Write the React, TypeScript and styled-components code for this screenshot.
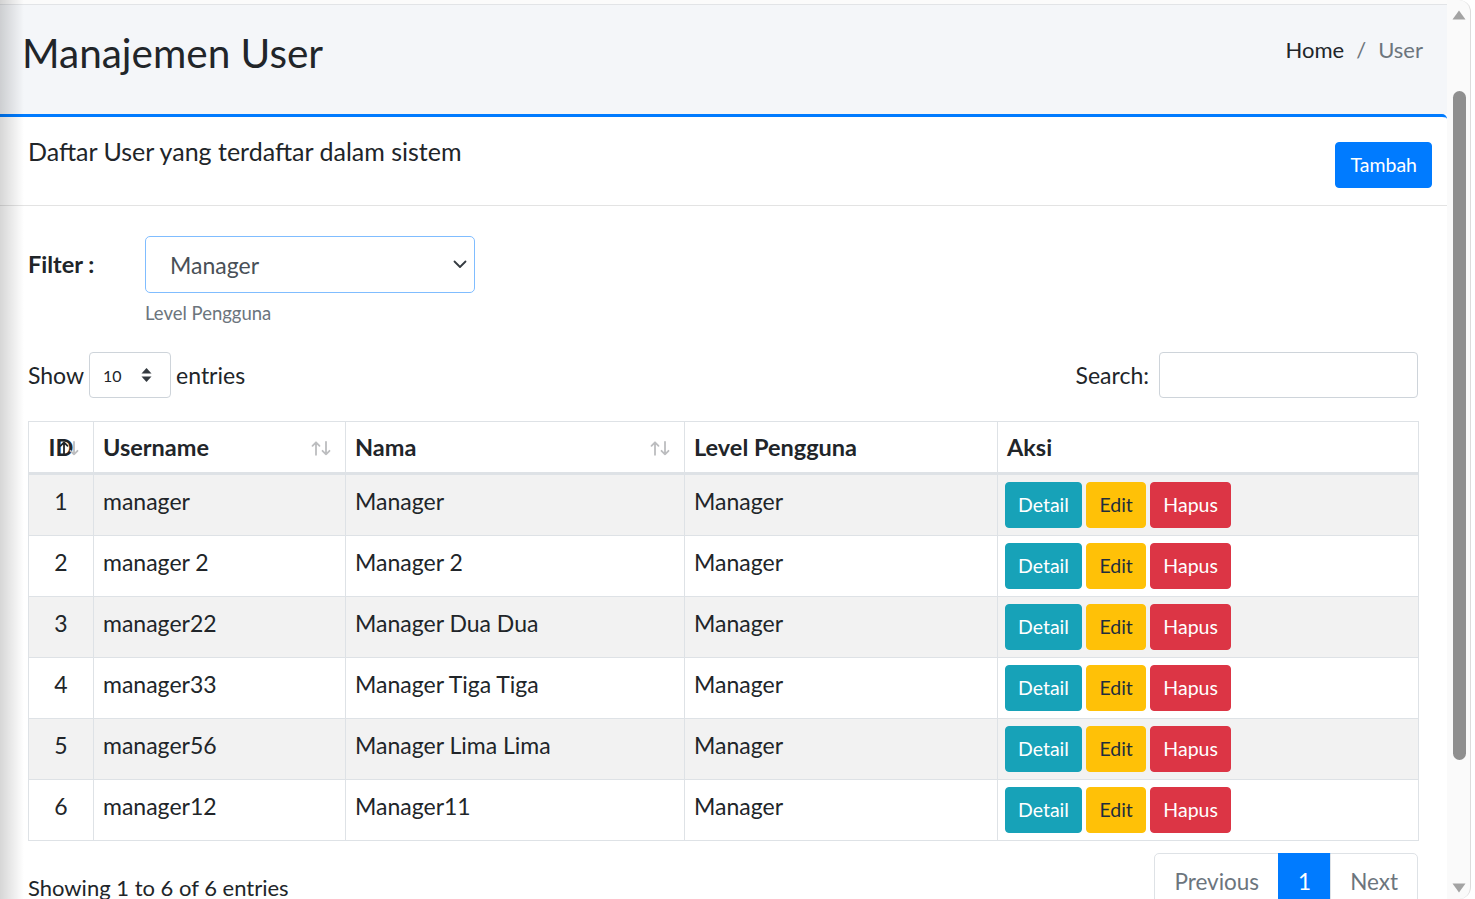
import styled, { createGlobalStyle, css } from "styled-components";

const GlobalStyle = createGlobalStyle`
  html, body {
    margin: 0;
    padding: 0;
    overflow: hidden;
  }
  body {
    font-family: Lato, "Noto Sans", "DejaVu Sans", sans-serif;
    color: #212529;
    background: #fff;
  }
  * {
    box-sizing: border-box;
  }
`;

type Variant = "primary" | "info" | "warning" | "danger";

const variants: Record<Variant, { bg: string; fg: string }> = {
  primary: { bg: "#007bff", fg: "#fff" },
  info: { bg: "#17a2b8", fg: "#fff" },
  warning: { bg: "#ffc107", fg: "#1f2d3d" },
  danger: { bg: "#dc3545", fg: "#fff" },
};

const users = [
  { id: 1, username: "manager", nama: "Manager", level: "Manager" },
  { id: 2, username: "manager 2", nama: "Manager 2", level: "Manager" },
  { id: 3, username: "manager22", nama: "Manager Dua Dua", level: "Manager" },
  { id: 4, username: "manager33", nama: "Manager Tiga Tiga", level: "Manager" },
  { id: 5, username: "manager56", nama: "Manager Lima Lima", level: "Manager" },
  { id: 6, username: "manager12", nama: "Manager11", level: "Manager" },
];

function SortArrows({ active }: { active?: boolean }) {
  return (
    <SortIcon width="20" height="16" viewBox="0 0 20 16">
      <g fill="none" strokeWidth="1.8" strokeLinecap="round" strokeLinejoin="round">
        <path d="M5 14.5V2M1.5 5.5L5 2l3.5 3.5" stroke={active ? "#212529" : "#bcbdbf"} />
        <path d="M15 1.5V14M11.5 10.5L15 14l3.5-3.5" stroke="#bcbdbf" />
      </g>
    </SortIcon>
  );
}

function App() {
  return (
    <>
      <GlobalStyle />
      <Frame>
        <Page>
          <SideShadow />
          <TopStrip />

          <ContentHeader>
            <PageTitle>Manajemen User</PageTitle>
            <Breadcrumb>
              <Crumb>Home</Crumb>
              <Separator>/</Separator>
              <Crumb $muted>User</Crumb>
            </Breadcrumb>
          </ContentHeader>

          <Card>
            <CardHeader>
              <CardTitle>Daftar User yang terdaftar dalam sistem</CardTitle>
              <Button $variant="primary" $top={25} $pad={14}>
                Tambah
              </Button>
            </CardHeader>

            <CardBody>
              <FilterRow>
                <FilterLabel>Filter :</FilterLabel>
                <FilterField>
                  <SelectBox>
                    <span>Manager</span>
                    <svg width="14" height="9" viewBox="0 0 14 9">
                      <path
                        d="M1.5 1.5L7 7l5.5-5.5"
                        fill="none"
                        stroke="#343a40"
                        strokeWidth="1.8"
                        strokeLinecap="round"
                        strokeLinejoin="round"
                      />
                    </svg>
                  </SelectBox>
                  <HelpText>Level Pengguna</HelpText>
                </FilterField>
              </FilterRow>

              <ControlsRow>
                <LengthControl>
                  <span>Show</span>
                  <SmallSelect>
                    <span>10</span>
                    <svg width="11" height="16" viewBox="0 0 11 16">
                      <path d="M5.5 1L10.5 6.5H0.5Z" fill="#343a40" />
                      <path d="M5.5 15L10.5 9.5H0.5Z" fill="#343a40" />
                    </svg>
                  </SmallSelect>
                  <span>entries</span>
                </LengthControl>

                <SearchControl>
                  <span>Search:</span>
                  <SearchInput />
                </SearchControl>
              </ControlsRow>

              <Table>
                <thead>
                  <tr>
                    <Th $width={65} $center>
                      ID
                      <SortArrows active />
                    </Th>
                    <Th $width={252}>
                      Username
                      <SortArrows />
                    </Th>
                    <Th $width={339}>
                      Nama
                      <SortArrows />
                    </Th>
                    <Th $width={313}>Level Pengguna</Th>
                    <Th $width={421}>Aksi</Th>
                  </tr>
                </thead>
                <tbody>
                  {users.map((u) => (
                    <Row key={u.id}>
                      <Td $center>{u.id}</Td>
                      <Td>{u.username}</Td>
                      <Td>{u.nama}</Td>
                      <Td>{u.level}</Td>
                      <ActionCell>
                        <ButtonGroup>
                          <Button $variant="info">Detail</Button>
                          <Button $variant="warning">Edit</Button>
                          <Button $variant="danger">Hapus</Button>
                        </ButtonGroup>
                      </ActionCell>
                    </Row>
                  ))}
                </tbody>
              </Table>

              <TableFooter>
                <Info>Showing 1 to 6 of 6 entries</Info>
                <Pagination>
                  <PageLink $first>Previous</PageLink>
                  <PageLink $active>1</PageLink>
                  <PageLink $last>Next</PageLink>
                </Pagination>
              </TableFooter>
            </CardBody>
          </Card>
        </Page>

        <Scrollbar>
          <Track>
            <ScrollArrow width="14" height="10" viewBox="0 0 14 10">
              <path d="M7 0.5L13.5 9.5H0.5Z" fill="#a3a3a3" />
            </ScrollArrow>
            <Thumb />
            <ScrollArrow width="14" height="10" viewBox="0 0 14 10" $bottom>
              <path d="M7 9.5L13.5 0.5H0.5Z" fill="#a3a3a3" />
            </ScrollArrow>
          </Track>
        </Scrollbar>
      </Frame>
    </>
  );
}

export default App;

const Frame = styled.div`
  display: flex;
  width: 1475px;
  height: 899px;
  overflow: hidden;
  background: #fff;
`;

const Page = styled.div`
  flex: 0 0 1447px;
  position: relative;
  overflow: hidden;
  background: #fff;
`;

const SideShadow = styled.div`
  position: absolute;
  top: 0;
  bottom: 0;
  left: 0;
  width: 24px;
  background: linear-gradient(to right, rgba(0, 0, 0, 0.16), rgba(0, 0, 0, 0));
  pointer-events: none;
  z-index: 2;
`;

const TopStrip = styled.div`
  height: 5px;
  background: #fbfbfb;
  border-bottom: 1px solid #e2e4e7;
`;

const ContentHeader = styled.div`
  height: 109px;
  background: #f4f6f9;
  display: flex;
  justify-content: space-between;
  align-items: flex-start;
  padding: 21px 24px 0 22px;
`;

const PageTitle = styled.h1`
  margin: 0;
  font-size: 40.5px;
  font-weight: 400;
  line-height: 53px;
`;

const Breadcrumb = styled.ol`
  list-style: none;
  margin: 6px 0 0;
  padding: 0;
  display: flex;
  font-size: 22px;
  line-height: 36px;
`;

const Crumb = styled.li<{ $muted?: boolean }>`
  color: ${(p) => (p.$muted ? "#6c757d" : "#212529")};
`;

const Separator = styled.li`
  color: #6c757d;
  padding: 0 12px;
`;

const Card = styled.div`
  background: #fff;
  border-top: 3px solid #007bff;
  border-top-right-radius: 5px;
`;

const CardHeader = styled.div`
  height: 89px;
  display: flex;
  justify-content: space-between;
  align-items: flex-start;
  padding: 0 15px 0 28px;
  border-bottom: 1px solid #e3e3e3;
`;

const CardTitle = styled.h3`
  margin: 18px 0 0;
  font-size: 25px;
  font-weight: 400;
  line-height: 33px;
`;

const Button = styled.button<{ $variant: Variant; $top?: number; $pad?: number }>`
  height: 46px;
  display: inline-flex;
  align-items: center;
  justify-content: center;
  border-radius: 4px;
  font-family: inherit;
  font-size: 19.5px;
  line-height: 1;
  cursor: pointer;
  ${(p) => css`
    margin-top: ${p.$top ?? 0}px;
    padding: 0 ${p.$pad ?? 12}px;
    background: ${variants[p.$variant].bg};
    border: 1px solid ${variants[p.$variant].bg};
    color: ${variants[p.$variant].fg};
  `}
`;

const CardBody = styled.div`
  padding: 30px 29px 0 28px;
`;

const FilterRow = styled.div`
  display: flex;
  align-items: flex-start;
`;

const FilterLabel = styled.label`
  width: 117px;
  font-weight: 700;
  font-size: 23.5px;
  line-height: 57px;
`;

const FilterField = styled.div`
  width: 330px;
`;

const SelectBox = styled.div`
  height: 57px;
  border: 1px solid #80bdff;
  border-radius: 5px;
  padding: 0 7px 0 24px;
  display: flex;
  align-items: center;
  justify-content: space-between;
  font-size: 23px;
  color: #495057;
`;

const HelpText = styled.div`
  margin-top: 6px;
  font-size: 18.5px;
  line-height: 29px;
  color: #6c757d;
`;

const ControlsRow = styled.div`
  margin-top: 24px;
  height: 46px;
  display: flex;
  justify-content: space-between;
  align-items: center;
  font-size: 23px;
`;

const LengthControl = styled.div`
  display: flex;
  align-items: center;
  gap: 5px;
`;

const SmallSelect = styled.div`
  width: 82px;
  height: 46px;
  border: 1px solid #ced4da;
  border-radius: 4px;
  padding: 0 18px 0 13px;
  display: flex;
  align-items: center;
  justify-content: space-between;
  font-size: 16px;
  color: #212529;
`;

const SearchControl = styled.div`
  display: flex;
  align-items: center;
  gap: 10px;
`;

const SearchInput = styled.div`
  width: 259px;
  height: 46px;
  border: 1px solid #ced4da;
  border-radius: 4px;
`;

const Table = styled.table`
  margin-top: 23px;
  width: 1390px;
  border-collapse: collapse;
  table-layout: fixed;
`;

const Th = styled.th<{ $width: number; $center?: boolean }>`
  position: relative;
  width: ${(p) => p.$width}px;
  border: 1px solid #dee2e6;
  border-bottom-width: 3px;
  padding: 7px 9px;
  text-align: ${(p) => (p.$center ? "center" : "left")};
  font-size: 23.5px;
  font-weight: 700;
  line-height: 36px;
`;

const SortIcon = styled.svg`
  position: absolute;
  right: 14px;
  top: 50%;
  transform: translateY(-42%);
`;

const Row = styled.tr`
  &:nth-child(odd) {
    background: #f2f2f2;
  }
`;

const Td = styled.td<{ $center?: boolean }>`
  border: 1px solid #dee2e6;
  padding: 8px 9px 7px;
  vertical-align: top;
  font-size: 23px;
  line-height: 36px;
  text-align: ${(p) => (p.$center ? "center" : "left")};
`;

const ActionCell = styled.td`
  border: 1px solid #dee2e6;
  padding: 7px 7px;
  vertical-align: top;
`;

const ButtonGroup = styled.div`
  display: flex;
  gap: 4.5px;
`;

const TableFooter = styled.div`
  margin-top: 12px;
  display: flex;
  justify-content: space-between;
  align-items: flex-start;
`;

const Info = styled.div`
  padding-top: 17px;
  font-size: 22px;
  line-height: 36px;
`;

const Pagination = styled.div`
  display: flex;
`;

const PageLink = styled.div<{ $active?: boolean; $first?: boolean; $last?: boolean }>`
  height: 56px;
  padding: 0 19px;
  margin-left: -1px;
  display: flex;
  align-items: center;
  font-size: 22.5px;
  border: 1px solid ${(p) => (p.$active ? "#007bff" : "#dee2e6")};
  background: ${(p) => (p.$active ? "#007bff" : "#fff")};
  color: ${(p) => (p.$active ? "#fff" : "#6c757d")};
  border-radius: ${(p) => (p.$first ? "5px 0 0 5px" : p.$last ? "0 5px 5px 0" : "0")};
`;

const Scrollbar = styled.div`
  flex: 0 0 28px;
  background: #fff;
`;

const Track = styled.div`
  width: 24px;
  height: 100%;
  background: #fafafa;
  border-right: 1px solid #dcdcdc;
  border-radius: 0 12px 12px 0;
  display: flex;
  flex-direction: column;
  align-items: center;
  padding-left: 1px;
`;

const ScrollArrow = styled.svg<{ $bottom?: boolean }>`
  flex: none;
  margin-top: ${(p) => (p.$bottom ? "auto" : "10px")};
  margin-bottom: ${(p) => (p.$bottom ? "6px" : "0")};
`;

const Thumb = styled.div`
  flex: none;
  margin-top: 71px;
  width: 13px;
  height: 669px;
  border-radius: 7px;
  background: #8f8f8f;
`;
